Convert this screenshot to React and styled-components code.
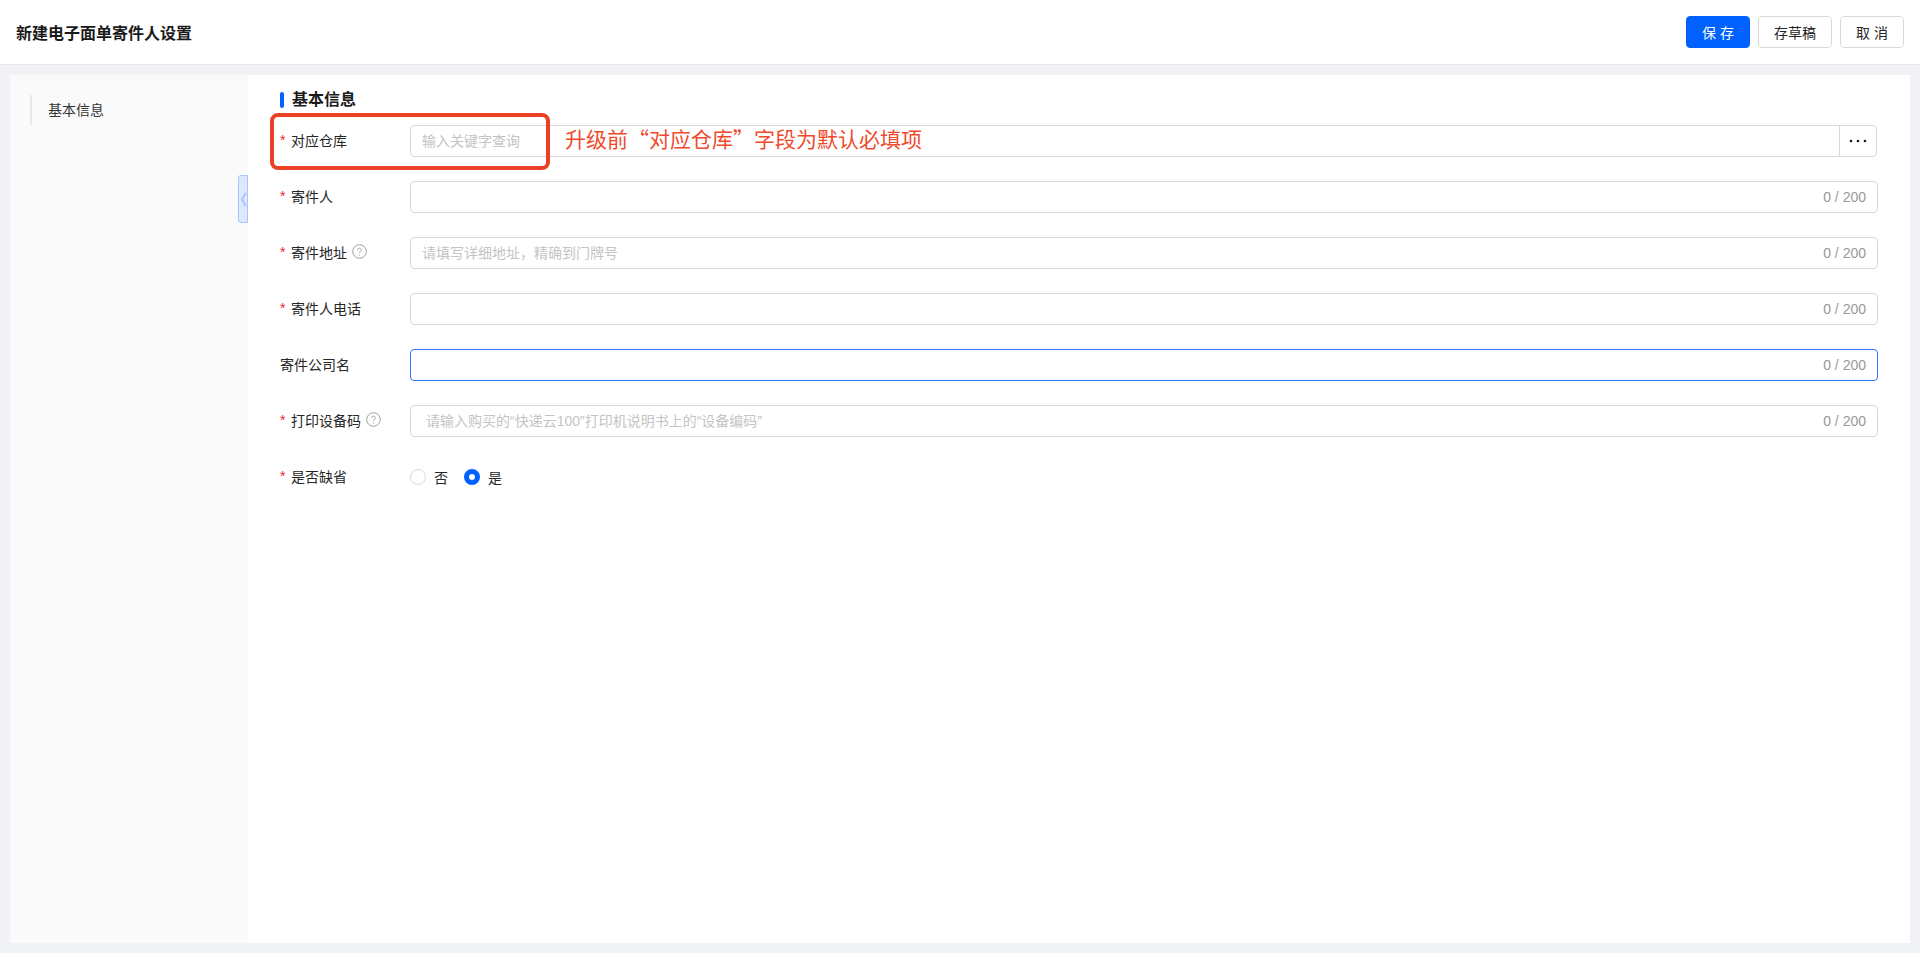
import React from 'react';
import styled, { createGlobalStyle } from 'styled-components';

const GlobalStyle = createGlobalStyle`
    html, body {
        margin: 0;
        padding: 0;
    }
    body {
        font-family: "Liberation Sans", "Noto Sans CJK SC", sans-serif;
        color: #1f1f1f;
        background: #f0f2f5;
    }
    * {
        box-sizing: border-box;
    }
`;

const fields = [
    { label: '寄件人', required: true, counter: true },
    { label: '寄件地址', required: true, help: true, counter: true, placeholder: '请填写详细地址，精确到门牌号' },
    { label: '寄件人电话', required: true, counter: true },
    { label: '寄件公司名', focused: true, counter: true },
    { label: '打印设备码', required: true, help: true, counter: true, wide: true, placeholder: '请输入购买的“快递云100”打印机说明书上的“设备编码”' },
];

const HelpIcon = () => (
    <HelpSvg viewBox="0 0 15 15" width="15" height="15">
        <circle cx="7.5" cy="7.5" r="6.8" fill="none" stroke="#a0a0a0" strokeWidth="1" />
        <path d="M5.6 6c0-1.1.9-1.8 1.9-1.8s1.9.7 1.9 1.7c0 1.3-1.9 1.4-1.9 2.9" fill="none" stroke="#a0a0a0" strokeWidth="1" />
        <circle cx="7.5" cy="10.9" r=".7" fill="#a0a0a0" />
    </HelpSvg>
);

const Dots = () => (
    <svg viewBox="0 0 18 4" width="18" height="4">
        <circle cx="2" cy="2" r="1.3" fill="#1a1a1a" />
        <circle cx="9" cy="2" r="1.3" fill="#1a1a1a" />
        <circle cx="16" cy="2" r="1.3" fill="#1a1a1a" />
    </svg>
);

const FieldRow = ({ label, required, help, counter, focused, wide, placeholder }) => (
    <Row>
        <Label>
            {required && <Star>*</Star>}
            {label}
            {help && <HelpIcon />}
        </Label>
        <InputBox $focused={focused}>
            <TextInput $wide={wide} placeholder={placeholder} />
            {counter && <Counter>0 / 200</Counter>}
        </InputBox>
    </Row>
);

export default function App() {
    return (
        <Page>
            <GlobalStyle />
            <Header>
                <Title>新建电子面单寄件人设置</Title>
                <Actions>
                    <Button $primary $spaced>保存</Button>
                    <Button $width={74}>存草稿</Button>
                    <Button $spaced>取消</Button>
                </Actions>
            </Header>
            <Body>
                <Sidebar>
                    <NavItem>基本信息</NavItem>
                    <CollapseTab>
                        <svg viewBox="0 0 7 15" width="7" height="15">
                            <path d="M5.8 1 2 7.5 5.8 14" fill="none" stroke="#a9c4ff" strokeWidth="2" />
                        </svg>
                    </CollapseTab>
                </Sidebar>
                <Main>
                    <SectionTitle>基本信息</SectionTitle>
                    <Form>
                        <Row>
                            <Label>
                                <Star>*</Star>
                                对应仓库
                            </Label>
                            <LookupBox>
                                <TextInput placeholder="输入关键字查询" />
                                <LookupButton><Dots /></LookupButton>
                            </LookupBox>
                        </Row>
                        {fields.map((field) => (
                            <FieldRow key={field.label} {...field} />
                        ))}
                        <Row>
                            <Label>
                                <Star>*</Star>
                                是否缺省
                            </Label>
                            <RadioGroup>
                                <RadioOption><RadioDot />否</RadioOption>
                                <RadioOption><RadioDot $checked />是</RadioOption>
                            </RadioGroup>
                        </Row>
                    </Form>
                </Main>
            </Body>
            <Highlight />
            <Note>升级前“对应仓库”字段为默认必填项</Note>
        </Page>
    );
}

const Page = styled.div`
    position: relative;
    display: flex;
    flex-direction: column;
    height: 953px;
    overflow: hidden;
`;

const Header = styled.header`
    display: flex;
    align-items: center;
    justify-content: space-between;
    height: 65px;
    padding: 0 16px;
    background: #fff;
    border-bottom: 1px solid #e8e8e8;
`;

const Title = styled.h1`
    margin: 0;
    font-size: 16px;
    font-weight: 600;
    color: #1a1a1a;
`;

const Actions = styled.div`
    display: flex;
    gap: 8px;
`;

const Button = styled.button`
    width: ${(p) => p.$width || 64}px;
    height: 32px;
    padding: 0;
    font-family: inherit;
    font-size: 14px;
    letter-spacing: ${(p) => (p.$spaced ? '4px' : '0')};
    text-indent: ${(p) => (p.$spaced ? '4px' : '0')};
    color: ${(p) => (p.$primary ? '#fff' : '#262626')};
    background: ${(p) => (p.$primary ? '#0061ff' : '#fff')};
    border: 1px solid ${(p) => (p.$primary ? '#0061ff' : '#d9d9d9')};
    border-radius: 4px;
`;

const Body = styled.div`
    flex: 1;
    display: flex;
    min-height: 0;
    margin: 10px;
`;

const Sidebar = styled.aside`
    position: relative;
    flex: 0 0 238px;
    padding-top: 20px;
    padding-left: 20px;
    background: #fafafa;
`;

const NavItem = styled.div`
    height: 30px;
    padding-left: 16px;
    font-size: 14px;
    line-height: 30px;
    color: #333;
    border-left: 2px solid #e8e8e8;
`;

const CollapseTab = styled.div`
    position: absolute;
    top: 100px;
    right: 0;
    display: flex;
    align-items: center;
    justify-content: center;
    width: 10px;
    height: 48px;
    background: #dde8ff;
    border: 1px solid #a9c4ff;
    border-radius: 3px 0 0 3px;
`;

const Main = styled.main`
    flex: 1;
    padding: 14px 32px 0;
    background: #fff;
`;

const SectionTitle = styled.h2`
    position: relative;
    height: 22px;
    margin: 0 0 14px;
    padding-left: 12px;
    font-size: 16px;
    font-weight: 600;
    line-height: 22px;
    color: #1a1a1a;

    &::before {
        content: '';
        position: absolute;
        top: 3px;
        left: 0;
        width: 4px;
        height: 16px;
        background: #0061ff;
        border-radius: 2px;
    }
`;

const Form = styled.div`
    display: flex;
    flex-direction: column;
    gap: 24px;
`;

const Row = styled.div`
    display: flex;
    align-items: center;
    height: 32px;
`;

const Label = styled.div`
    display: flex;
    align-items: center;
    flex: 0 0 130px;
    padding-bottom: 2px;
    font-size: 14px;
    color: #262626;
`;

const Star = styled.span`
    width: 11px;
    color: #f5222d;
    font-size: 14px;
`;

const HelpSvg = styled.svg`
    margin-left: 5px;
    margin-top: -1px;
`;

const InputBox = styled.div`
    flex: 1;
    display: flex;
    align-items: center;
    height: 32px;
    padding-right: 11px;
    background: #fff;
    border: 1px solid ${(p) => (p.$focused ? '#2f74ff' : '#d9d9d9')};
    border-radius: 4px;
`;

const TextInput = styled.input`
    flex: 1;
    min-width: 0;
    height: 100%;
    padding: 0 0 0 ${(p) => (p.$wide ? 15 : 11)}px;
    font-family: inherit;
    font-size: 14px;
    background: transparent;
    border: 0;
    outline: none;

    &::placeholder {
        color: #c4c4c4;
    }
`;

const Counter = styled.span`
    font-size: 14px;
    color: #999;
`;

const LookupBox = styled(InputBox)`
    padding-right: 0;
    margin-right: 1px;
`;

const LookupButton = styled.div`
    display: flex;
    align-items: center;
    justify-content: center;
    width: 37px;
    height: 100%;
    border-left: 1px solid #d9d9d9;
`;

const RadioGroup = styled.div`
    display: flex;
    gap: 16px;
`;

const RadioOption = styled.label`
    display: flex;
    align-items: center;
    gap: 8px;
    font-size: 14px;
    color: #262626;
`;

const RadioDot = styled.span`
    width: 16px;
    height: 16px;
    background: #fff;
    border-radius: 50%;
    border: ${(p) => (p.$checked ? '5px solid #0061ff' : '1px solid #d9d9d9')};
`;

const Highlight = styled.div`
    position: absolute;
    top: 113px;
    left: 270px;
    width: 280px;
    height: 57px;
    border: 4px solid #ea4025;
    border-radius: 8px;
    pointer-events: none;
`;

const Note = styled.div`
    position: absolute;
    top: 122px;
    left: 565px;
    font-family: "Noto Sans CJK SC", sans-serif;
    font-size: 21px;
    line-height: 32px;
    color: #ef4a2e;
    white-space: nowrap;
`;
